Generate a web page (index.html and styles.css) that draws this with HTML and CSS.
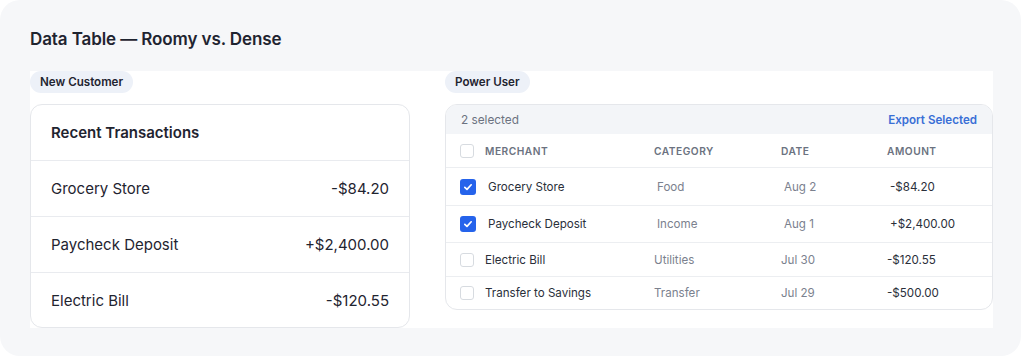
FILE: index.html
```html
<!DOCTYPE html>
<html lang="en">
<head>
<meta charset="utf-8">
<title>Data Table — Roomy vs. Dense</title>
<link rel="stylesheet" href="styles.css">
</head>
<body>
<div class="frame">
  <h1 class="title">Data Table — Roomy vs. Dense</h1>
  <div class="panel">
    <section class="col col-left">
      <span class="badge">New Customer</span>
      <div class="card roomy">
        <div class="roomy-head">Recent Transactions</div>
        <div class="roomy-row"><span>Grocery Store</span><span>-$84.20</span></div>
        <div class="roomy-row"><span>Paycheck Deposit</span><span>+$2,400.00</span></div>
        <div class="roomy-row"><span>Electric Bill</span><span>-$120.55</span></div>
      </div>
    </section>
    <section class="col col-right">
      <span class="badge">Power User</span>
      <div class="card dense">
        <div class="toolbar">
          <span class="sel-count">2 selected</span>
          <span class="export">Export Selected</span>
        </div>
        <div class="drow dhead">
          <span class="cb"></span>
          <span class="c-merchant">MERCHANT</span>
          <span class="c-cat">CATEGORY</span>
          <span class="c-date">DATE</span>
          <span class="c-amt">AMOUNT</span>
        </div>
        <div class="drow selected">
          <span class="cb on"><svg viewBox="0 0 16 16" width="16" height="16"><path d="M4.8 8.3l2.2 2.1 4.2-4.6" fill="none" stroke="#fff" stroke-width="1.7" stroke-linecap="round" stroke-linejoin="round"/></svg></span>
          <span class="c-merchant">Grocery Store</span>
          <span class="c-cat">Food</span>
          <span class="c-date">Aug 2</span>
          <span class="c-amt">-$84.20</span>
        </div>
        <div class="drow selected">
          <span class="cb on"><svg viewBox="0 0 16 16" width="16" height="16"><path d="M4.8 8.3l2.2 2.1 4.2-4.6" fill="none" stroke="#fff" stroke-width="1.7" stroke-linecap="round" stroke-linejoin="round"/></svg></span>
          <span class="c-merchant">Paycheck Deposit</span>
          <span class="c-cat">Income</span>
          <span class="c-date">Aug 1</span>
          <span class="c-amt">+$2,400.00</span>
        </div>
        <div class="drow">
          <span class="cb"></span>
          <span class="c-merchant">Electric Bill</span>
          <span class="c-cat">Utilities</span>
          <span class="c-date">Jul 30</span>
          <span class="c-amt">-$120.55</span>
        </div>
        <div class="drow last">
          <span class="cb"></span>
          <span class="c-merchant">Transfer to Savings</span>
          <span class="c-cat">Transfer</span>
          <span class="c-date">Jul 29</span>
          <span class="c-amt">-$500.00</span>
        </div>
      </div>
    </section>
  </div>
</div>
</body>
</html>
```

FILE: styles.css
```css
* { box-sizing: border-box; }
html, body { margin: 0; padding: 0; background: #ffffff; }
body { font-family: Inter, "Noto Sans", "Liberation Sans", sans-serif; color: #1f2937; }

.frame {
  width: 1021px;
  height: 356px;
  background: #f6f7f9;
  border-radius: 20px;
  padding: 27px 0 0 30px;
}

.title {
  margin: 0;
  font-size: 17px;
  line-height: 24px;
  font-weight: 600;
  color: #1f2430;
  letter-spacing: -0.1px;
}

.panel {
  margin-top: 20px;
  width: 963px;
  background: #ffffff;
  display: flex;
  gap: 35px;
  align-items: flex-start;
}

.col { display: flex; flex-direction: column; align-items: flex-start; gap: 11px; }
.col-left { width: 380px; }
.col-right { width: 548px; }

.badge {
  display: inline-block;
  height: 22px;
  line-height: 22px;
  padding: 0 10px;
  border-radius: 11px;
  background: #edf1f8;
  font-size: 11.6px;
  font-weight: 600;
  color: #1f2430;
}

.card {
  width: 100%;
  border: 1px solid #e5e7eb;
  border-radius: 12px;
  background: #ffffff;
  overflow: hidden;
}

/* Roomy */
.roomy-head {
  height: 56px;
  padding: 0 20px;
  display: flex;
  align-items: center;
  font-size: 15px;
  font-weight: 600;
  color: #1f2430;
  border-bottom: 1px solid #e9ebef;
}
.roomy-row {
  height: 56px;
  padding: 0 20px;
  display: flex;
  align-items: center;
  justify-content: space-between;
  font-size: 15px;
  color: #1f2430;
  border-bottom: 1px solid #e9ebef;
}
.roomy-row:last-child { border-bottom: none; height: 54px; }

/* Dense */
.toolbar {
  height: 29px;
  background: #f3f5f8;
  display: flex;
  align-items: center;
  justify-content: space-between;
  padding: 0 15px 0 15px;
  font-size: 11.8px;
}
.sel-count { color: #6b7280; }
.export { color: #3a6fd6; font-weight: 600; font-size: 11.6px; }

.drow {
  display: flex;
  align-items: center;
  height: 34px;
  padding-left: 14px;
  border-bottom: 1px solid #eceef1;
  font-size: 11.6px;
  color: #2a2f3a;
}
.drow.selected { height: 38px; }
.drow.selected + .drow.selected { height: 37px; }
.drow.last { border-bottom: none; height: 32px; }
.dhead {
  height: 34px;
  font-size: 10.2px;
  font-weight: 600;
  letter-spacing: 0.5px;
  color: #6b7280;
}

.cb {
  flex: none;
  width: 14px;
  height: 14px;
  margin-right: 11px;
  border: 1px solid #d7dbe0;
  border-radius: 3px;
  background: #fff;
  display: flex;
  align-items: center;
  justify-content: center;
}
.cb.on {
  width: 16px;
  height: 16px;
  margin-right: 12px;
  border: none;
  background: #2563eb;
}
.cb svg { display: block; }

.c-merchant { flex: none; width: 169px; }
.c-cat { flex: none; width: 127px; color: #7b818e; }
.c-date { flex: none; width: 106px; color: #7b818e; }
.dhead .c-cat, .dhead .c-date { color: #6b7280; }
.c-amt { flex: 1; }
```
